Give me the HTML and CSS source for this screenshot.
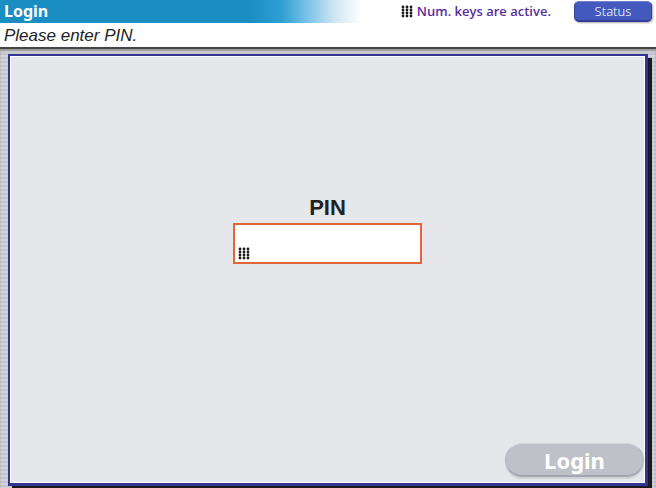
FILE: index.html
```
<!DOCTYPE html>
<html lang="en">
<head>
    <meta charset="UTF-8">
    <title>Login</title>
    <link rel="stylesheet" href="styles.css">
</head>
<body>
<svg class="symbols" aria-hidden="true">
    <symbol id="keypad" viewBox="0 0 12 13">
        <g fill="#1c1c1c">
            <circle cx="2" cy="2" r="1.4"/><circle cx="6" cy="2" r="1.4"/><circle cx="10" cy="2" r="1.4"/>
            <circle cx="2" cy="5" r="1.4"/><circle cx="6" cy="5" r="1.4"/><circle cx="10" cy="5" r="1.4"/>
            <circle cx="2" cy="8" r="1.4"/><circle cx="6" cy="8" r="1.4"/><circle cx="10" cy="8" r="1.4"/>
            <circle cx="2" cy="11" r="1.4"/><circle cx="6" cy="11" r="1.4"/><circle cx="10" cy="11" r="1.4"/>
        </g>
    </symbol>
</svg>
<header class="topbar">
    <h1 class="title">Login</h1>
    <div class="keys-info">
        <svg class="keypad"><use href="#keypad"/></svg>
        <span>Num. keys are active.</span>
    </div>
    <button type="button" class="status">Status</button>
</header>
<p class="message">Please enter PIN.</p>
<main class="screen">
    <form class="panel">
        <div class="field">
            <label for="pin">PIN</label>
            <div class="pin-box">
                <svg class="keypad"><use href="#keypad"/></svg>
                <input type="password" id="pin" inputmode="numeric">
            </div>
        </div>
        <button type="submit" class="login">Login</button>
    </form>
</main>
</body>
</html>
```
FILE: styles.css
```
* {
    box-sizing: border-box;
}

body {
    display: flex;
    flex-direction: column;
    min-height: 100vh;
    margin: 0;
    background-color: #fff;
    color: #222;
    font-family: "Liberation Sans", Arial, sans-serif;
}

.symbols {
    display: none;
}

.keypad {
    width: 12px;
    height: 13px;
    flex: none;
}

.topbar {
    display: flex;
    align-items: center;
    height: 23px;
    padding: 0 4px;
    background: linear-gradient(to right, #1a8dc3 38%, #2fa0d4 43%, #7dc4e8 47%, #cfe6f2 51%, #fff 55%);
}

.title {
    flex: 1;
    margin: 0;
    color: #fff;
    font: bold 16px/23px "Noto Sans", sans-serif;
}

.keys-info {
    display: flex;
    align-items: center;
    gap: 4px;
    margin-right: 23px;
    color: #5a2d9c;
    font: 600 13px/23px "Open Sans", "Noto Sans", sans-serif;
}

.status {
    width: 78px;
    height: 21px;
    padding: 0;
    border: 1px solid #3345a0;
    border-top-color: #7482cf;
    border-bottom: 2px solid #2f4096;
    border-radius: 5px;
    background-color: #4359bd;
    box-shadow: 1px 1px 2px #aaa;
    color: #fff;
    font: 300 13px/18px "Noto Sans", sans-serif;
}

.message {
    margin: 0;
    padding: 1px 0 0 4px;
    border-bottom: 2px solid #444;
    font-size: 17px;
    font-style: italic;
    line-height: 23px;
}

.screen {
    display: flex;
    flex: 1;
    padding: 5px 8px 2px;
    background: repeating-linear-gradient(#c3c4cb 0 2px, #d2d3da 2px 4px);
    box-shadow: inset 0 2px 2px #999;
}

.panel {
    display: flex;
    flex: 1;
    flex-direction: column;
    border: 2px solid #343293;
    border-right-width: 3px;
    border-bottom-width: 3px;
    background-color: #e6e7eb;
    box-shadow: 4px 4px 0 #1c1a1e, inset 1px 1px 0 #fff, inset -1px -1px 0 #fff;
}

.field {
    display: flex;
    flex: 1;
    flex-direction: column;
    align-items: center;
    justify-content: center;
    padding-bottom: 42px;
}

.field label {
    font-size: 22px;
    font-weight: bold;
    line-height: 30px;
}

.pin-box {
    display: flex;
    align-items: flex-end;
    gap: 4px;
    width: 189px;
    height: 41px;
    padding: 2px 3px;
    border: 2px solid #e0663a;
    background-color: #fff;
}

.pin-box input {
    flex: 1;
    min-width: 0;
    height: 100%;
    padding: 0;
    border: 0;
    outline: none;
    background: none;
    font-size: 20px;
}

.login {
    align-self: flex-end;
    width: 139px;
    height: 34px;
    margin: 0 1px 6px;
    padding: 0;
    border: 1px solid #b4b6be;
    border-top-color: #d4d5da;
    border-bottom: 2px solid #a5a7b0;
    border-radius: 17px;
    background-color: #bfc1c8;
    box-shadow: 0 2px 1px #d0d1d6;
    color: #fff;
    font: bold 22px/30px "Noto Sans", sans-serif;
}
```
